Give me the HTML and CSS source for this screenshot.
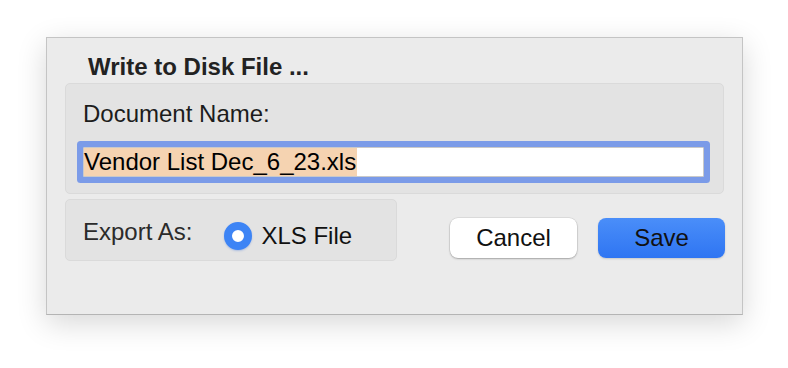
FILE: index.html
```html
<!DOCTYPE html>
<html lang="en">
<head>
<meta charset="UTF-8">
<meta name="viewport" content="width=device-width, initial-scale=1.0">
<title>Write to Disk File</title>
<link rel="stylesheet" href="styles.css">
</head>
<body>
<div class="dialog">
    <div class="dialog-title">Write to Disk File ...</div>
    <div class="group name-group">
        <div class="label">Document Name:</div>
        <div class="text-field"><span class="selected">Vendor List Dec_6_23.xls</span></div>
    </div>
    <div class="bottom-row">
        <div class="group export-group">
            <div class="label">Export As:</div>
            <div class="option">
                <span class="radio"></span>
                <span class="option-text">XLS File</span>
            </div>
        </div>
        <div class="buttons">
            <button class="button cancel">Cancel</button>
            <button class="button save">Save</button>
        </div>
    </div>
</div>
</body>
</html>
```

FILE: styles.css
```css
html {
    background-color: #ffffff;
}

body {
    font-family: "Liberation Sans", Arial, sans-serif;
    box-sizing: border-box;
    min-height: 368px;
    margin: 0;
    padding: 37px 0 0 46px;
    background-color: #ffffff;
}

.dialog {
    box-sizing: border-box;
    width: 697px;
    height: 278px;
    background-color: #ebebeb;
    border: 1px solid #c4c4c4;
    border-bottom-color: #b4b4b4;
    box-shadow: 0px 8px 28px rgba(0, 0, 0, 0.16);
    padding: 16px 17px 0 18px;
}

.dialog-title {
    font-size: 24px;
    font-weight: bold;
    line-height: 26px;
    color: #222;
    padding-left: 23px;
    margin-bottom: 3px;
}

.group {
    box-sizing: border-box;
    background-color: #e3e3e3;
    border: 1px solid #dadada;
    border-radius: 5px;
}

.label {
    font-size: 24px;
    line-height: 26px;
    color: #1c1c1c;
}

.name-group {
    width: 659px;
    height: 111px;
    padding: 17px 19px 0 17px;
}

.text-field {
    box-sizing: border-box;
    margin-top: 20px;
    height: 30px;
    background-color: #fff;
    border: 1px solid #c9c9c9;
    border-radius: 1px;
    box-shadow: 0px 0px 0px 6px #7b9be8;
    font-size: 24px;
    line-height: 28px;
    color: #000;
}

.selected {
    display: inline-block;
    background-color: #f5d3b1;
    padding-right: 1px;
}

.bottom-row {
    display: flex;
    align-items: flex-start;
    margin-top: 5px;
}

.export-group {
    display: flex;
    align-items: flex-start;
    width: 332px;
    height: 62px;
    padding: 19px 0 0 17px;
}

.export-group .label {
    color: #2b2b2b;
}

.option {
    display: flex;
    align-items: center;
    gap: 9px;
    margin-left: 32px;
    margin-top: 3px;
}

.radio {
    box-sizing: border-box;
    width: 28px;
    height: 28px;
    border-radius: 50%;
    background-color: #fff;
    border: 8px solid #3d84f5;
    box-shadow: 0px 1px 2px rgba(40, 100, 220, 0.3);
}

.option-text {
    font-size: 24px;
    line-height: 26px;
    color: #111;
}

.buttons {
    display: flex;
    gap: 21px;
    margin-left: auto;
    margin-top: 19px;
}

.button {
    width: 127px;
    height: 40px;
    font-family: "Liberation Sans", Arial, sans-serif;
    font-size: 24px;
    color: #111;
    border: none;
    border-radius: 8px;
    padding: 0;
    cursor: pointer;
}

.cancel {
    background-color: #fff;
    box-shadow: 0px 0px 0px 0.5px rgba(0, 0, 0, 0.12), 0px 1px 2px rgba(0, 0, 0, 0.25);
}

.save {
    background: linear-gradient(#4a8ef9, #2f75f2);
    box-shadow: 0px 1px 2px rgba(0, 0, 0, 0.15);
}
```
